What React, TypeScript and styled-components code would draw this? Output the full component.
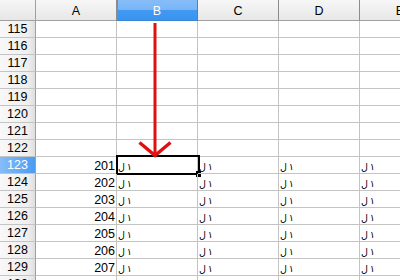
import styled, { createGlobalStyle, css } from 'styled-components';

// Spreadsheet view: rows 115–130, columns A–E, B123 is the cursor cell.

const GlobalStyle = createGlobalStyle`
  html, body {
    margin: 0;
    padding: 0;
    background: #ffffff;
    overflow: hidden;
  }
  body {
    font-family: 'Liberation Sans', 'DejaVu Sans', sans-serif;
    font-size: 12px;
    color: #000000;
  }
`;

const COLS = ['A', 'B', 'C', 'D', 'E'];
const FIRST_ROW = 115;
const LAST_ROW = 130;
const CURSOR_ROW = 123;
const CURSOR_COL = 'B';
const GLYPH = '\u0644\u2009\u0661';

const Sheet = styled.div`
  position: relative;
  width: 400px;
  height: 280px;
  overflow: hidden;
  display: grid;
  grid-template-columns: 36px repeat(5, 81px);
  grid-template-rows: 21px;
  grid-auto-rows: 17px;
  align-content: start;
`;

const Corner = styled.div`
  box-sizing: border-box;
  border-right: 1px solid #a0a0a0;
  border-bottom: 1px solid #a0a0a0;
  background: linear-gradient(#f6f6f6, #e6e6e6);
`;

const ColHead = styled.div<{ $active?: boolean }>`
  box-sizing: border-box;
  display: flex;
  align-items: center;
  justify-content: center;
  padding-top: 1px;
  border-right: 1px solid #8c8c8c;
  border-bottom: 1px solid #a0a0a0;
  background: linear-gradient(#f7f7f7, #e7e7e7);
  font-size: 12.5px;
  ${({ $active }) =>
    $active &&
    css`
      color: #ffffff;
      border-right-color: #3a86d6;
      border-bottom-color: #3a86d6;
      box-shadow: inset 1px 0 0 #4a95e4;
      background: linear-gradient(#86bdf8 0%, #79b5f6 48%, #4099f2 52%, #3a93ef 100%);
    `}
`;

const RowHead = styled.div<{ $active?: boolean }>`
  box-sizing: border-box;
  display: flex;
  align-items: center;
  justify-content: center;
  border-right: 1px solid #a0a0a0;
  border-bottom: 1px solid #c4c4c4;
  background: linear-gradient(to right, #f8f8f8 0%, #efefef 80%, #dedede 100%);
  font-size: 12.5px;
  ${({ $active }) =>
    $active &&
    css`
      color: #ffffff;
      background: linear-gradient(to right, #86bdf8 0%, #62a9f4 60%, #4a9cf1 100%);
    `}
`;

const Cell = styled.div<{ $align?: 'left' | 'right' }>`
  position: relative;
  box-sizing: border-box;
  display: flex;
  align-items: center;
  justify-content: ${({ $align }) => ($align === 'right' ? 'flex-end' : 'flex-start')};
  padding: 1px 1px 0 1px;
  border-right: 1px solid #c4c4c4;
  border-bottom: 1px solid #c4c4c4;
  font-size: 12.5px;
  white-space: nowrap;
`;

const Glyph = styled.span`
  display: inline-block;
  margin-top: 2px;
  font-family: 'DejaVu Sans', sans-serif;
  font-size: 9.5px;
  unicode-bidi: bidi-override;
  direction: ltr;
`;

const Cursor = styled.div`
  position: absolute;
  left: -1px;
  top: -2px;
  right: -3px;
  bottom: -2px;
  border: 2px solid #000000;
  pointer-events: none;

  &::after {
    content: '';
    position: absolute;
    right: -3px;
    bottom: -4px;
    width: 5px;
    height: 6px;
    background: #000000;
  }
`;

const Arrow = styled.svg`
  position: absolute;
  left: 0;
  top: 0;
  pointer-events: none;
`;

function cellContent(row: number, col: string) {
  if (row < CURSOR_ROW) return null;
  if (col === 'A') return String(201 + row - CURSOR_ROW);
  return <Glyph>{GLYPH}</Glyph>;
}

export default function App() {
  const rows: number[] = [];
  for (let r = FIRST_ROW; r <= LAST_ROW; r++) rows.push(r);

  return (
    <>
      <GlobalStyle />
      <Sheet>
        <Corner />
        {COLS.map((c) => (
          <ColHead key={c} $active={c === CURSOR_COL}>
            {c}
          </ColHead>
        ))}
        {rows.map((r) => (
          <Row key={r} row={r} />
        ))}
        <Arrow width="400" height="280" viewBox="0 0 400 280">
          <line x1="155" y1="23" x2="155" y2="153" stroke="#e01010" strokeWidth="3" />
          <polyline
            points="139.5,142.5 155,155.5 170.5,142.5"
            fill="none"
            stroke="#e01010"
            strokeWidth="3.4"
          />
        </Arrow>
      </Sheet>
    </>
  );
}

function Row({ row }: { row: number }) {
  return (
    <>
      <RowHead $active={row === CURSOR_ROW}>{row}</RowHead>
      {COLS.map((c) => (
        <Cell key={c} $align={c === 'A' ? 'right' : 'left'}>
          {cellContent(row, c)}
          {row === CURSOR_ROW && c === CURSOR_COL && <Cursor />}
        </Cell>
      ))}
    </>
  );
}
